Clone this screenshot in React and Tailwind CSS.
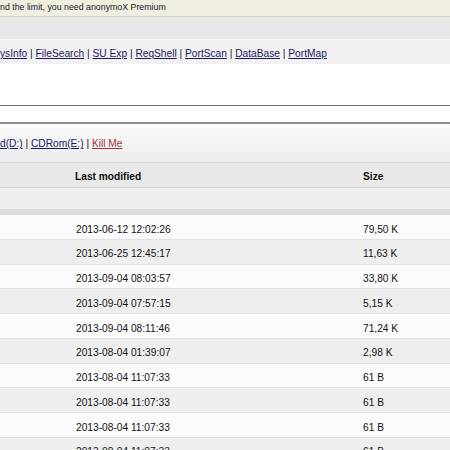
import React from 'react';

const rows = [
  { date: '2013-06-12 12:02:26', size: '79,50 K' },
  { date: '2013-06-25 12:45:17', size: '11,63 K' },
  { date: '2013-09-04 08:03:57', size: '33,80 K' },
  { date: '2013-09-04 07:57:15', size: '5,15 K' },
  { date: '2013-09-04 08:11:46', size: '71,24 K' },
  { date: '2013-08-04 01:39:07', size: '2,98 K' },
  { date: '2013-08-04 11:07:33', size: '61 B' },
  { date: '2013-08-04 11:07:33', size: '61 B' },
  { date: '2013-08-04 11:07:33', size: '61 B' },
  { date: '2013-08-04 11:07:33', size: '61 B' },
];

const tools = ['ysInfo', 'FileSearch', 'SU Exp', 'ReqShell', 'PortScan', 'DataBase', 'PortMap'];

export default function App() {
  return (
    <div className="w-[450px] h-[450px] overflow-hidden bg-white font-['Liberation_Sans',Arial,sans-serif] text-[#111]">
      {/* notification bar */}
      <div className="h-[17px] bg-[#efeee0] border-b border-[#d9d7c6] flex items-center text-[8.8px] text-[#222]">
        nd the limit, you need anonymoX Premium
      </div>
      <div className="h-[23px] bg-[#e8e8e8] border-b border-[#f7f7f7]" />

      {/* tools */}
      <div className="h-[24px] pt-[4px] bg-[#f1f1f1] flex items-center text-[10.2px] whitespace-pre">
        {tools.map((t, i) => (
          <span key={t}>
            {i > 0 && <span className="text-[#222]"> | </span>}
            <a className="underline text-[#1a1a66]">{t}</a>
          </span>
        ))}
      </div>

      <div className="h-[41px] bg-white" />
      <div className="h-px bg-[#6e6e6e]" />
      <div className="h-[16px] bg-white" />
      <div className="h-[2px] bg-[#8c8c8c]" />

      {/* drives */}
      <div className="h-[38px] pt-[2px] bg-gradient-to-b from-[#fbfbfb] to-[#ececec] flex items-center text-[10.2px] whitespace-pre">
        <a className="underline text-[#1a1a66]">d(D:)</a>
        <span> | </span>
        <a className="underline text-[#1a1a66]">CDRom(E:)</a>
        <span> | </span>
        <a className="underline text-[#a0303c]">Kill Me</a>
      </div>

      {/* table header */}
      <div className="border-t border-[#dcdcdc] border-b border-b-[#d2d2d2] h-[26px] pt-[4px] bg-[#e8e8e8] flex items-center text-[10.2px] font-bold">
        <div className="w-[75px]" />
        <div className="w-[288px]">Last modified</div>
        <div>Size</div>
      </div>
      <div className="h-[21px] bg-[#efefef]" />
      <div className="h-[6px] bg-[#dcdcdc]" />

      {rows.map((r, i) => (
        <div
          key={i}
          className={`h-[24.75px] pt-[5px] flex items-center border-b border-[#e2e2e2] text-[10.2px] ${i % 2 === 0 ? 'bg-[#fbfbfb]' : 'bg-[#eeeeee]'}`}
        >
          <div className="w-[76px]" />
          <div className="w-[287px]">{r.date}</div>
          <div>{r.size}</div>
        </div>
      ))}
    </div>
  );
}
